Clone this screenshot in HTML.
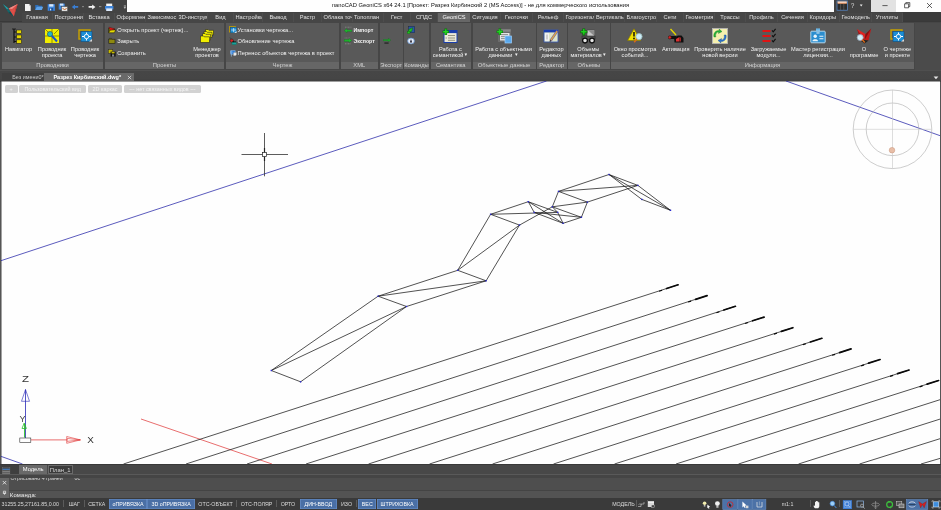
<!DOCTYPE html>
<html lang="ru">
<head>
<meta charset="utf-8">
<title>nanoCAD GeoniCS</title>
<style>
html,body{margin:0;padding:0;}
body{width:941px;height:510px;position:relative;overflow:hidden;background:#555;font-family:"Liberation Sans",sans-serif;color:#e6e6e6;}
.abs{position:absolute;}
svg{display:block;}
#app{position:absolute;left:0;top:0;width:941px;height:510px;overflow:hidden;filter:blur(0.3px);will-change:transform;opacity:0.999;}
/* title bar */
#tb-left{left:0;top:0;width:127px;height:12px;background:#444;}
#tb-title{left:127px;top:0;width:707px;height:11.6px;background:#fff;color:#111;font-size:5.78px;line-height:11px;text-align:center;white-space:nowrap;}
#tb-help{left:834px;top:0;width:37px;height:11.6px;background:#444;}
#tb-min{left:871px;top:0;width:25px;height:11.6px;background:#e3e3e3;}
#tb-rest{left:896px;top:0;width:45px;height:11.6px;background:#fff;}
/* ribbon tabs */
#tabs{left:0;top:11.6px;width:941px;height:10.4px;background:#444;border-bottom:0.8px solid #3a3a3a;box-sizing:border-box;}
.tab{position:absolute;top:1.2px;height:8.9px;line-height:9.6px;background:#474747;font-size:5.7px;color:#e2e2e2;white-space:nowrap;overflow:hidden;text-align:center;box-sizing:border-box;border-right:0.6px solid #4e4e4e;}
.tab.l{text-align:left;padding-left:1.5px;}
.tab.nb{border-right:none;}
.tab.act{background:#686868;color:#fff;border-right:none;}
/* ribbon body */
#ribbon{left:0;top:22px;width:941px;height:48px;background:#474747;}
.panel{position:absolute;top:0.6px;height:46.1px;background:#5a5a5a;}
.panel .lbl{position:absolute;left:0;right:0;bottom:0;height:6.6px;background:#676767;color:#d4d4d4;font-size:5.8px;line-height:6.8px;text-align:center;white-space:nowrap;overflow:hidden;}
.big{position:absolute;top:27px;font-size:5.65px;line-height:6.3px;color:#f2f2f2;text-align:center;white-space:nowrap;transform:translateX(-50%);}
.sm{position:absolute;font-size:5.75px;line-height:7px;color:#f2f2f2;white-space:nowrap;}
.ico{position:absolute;}
.dd{font-size:4.2px;position:relative;top:-0.5px;margin-left:0.4px;}
/* doc tabs */
#below{left:0;top:69.6px;width:941px;height:1.7px;background:#505050;}
#doctabs{left:0;top:71.3px;width:941px;height:10.3px;background:linear-gradient(#474747,#464646 70%,#3e3e3e);}
/* canvas */
#canvas{left:1px;top:81px;width:939px;height:383px;background:#fff;overflow:hidden;}
.vb{position:absolute;top:4px;height:7.5px;background:#d3d3d3;border-radius:1.5px;color:#f6f6f6;font-size:5.4px;line-height:8.6px;overflow:hidden;text-align:center;white-space:nowrap;}
/* bottom */
#modeltabs{left:0;top:464px;width:941px;height:10.2px;background:#494949;border-top:0.6px solid #3a3a3a;box-sizing:border-box;}
#cmdsep{left:0;top:474.2px;width:941px;height:4px;background:#464646;border-top:0.9px solid #5a5a5a;box-sizing:border-box;}
#cmdhist{left:0;top:478.2px;width:941px;height:11.6px;background:#4f4f4f;overflow:hidden;}
#cmdline{left:0;top:489.8px;width:941px;height:8.1px;background:#545454;border-top:0.7px solid #454545;box-sizing:border-box;}
#cmdleft{left:0;top:478.2px;width:9px;height:19.7px;background:#686868;}
#status{left:0;top:497.9px;width:941px;height:12.1px;background:#3b3b3b;}
.st{position:absolute;top:0.9px;height:10.4px;line-height:11.2px;font-size:5.3px;color:#dcdcdc;white-space:nowrap;text-align:center;}
.st.on{background:#4b70a6;color:#fff;box-shadow:inset 0 0 0 0.6px #6b92cc;}
</style>
</head>
<body>
<div id="app">
<!-- TITLE BAR -->
<div id="tb-left" class="abs">
<svg class="abs" style="left:0;top:0" width="126" height="22" viewBox="0 0 126 22">
<path d="M25 4H29L30.7 5.7V11H25Z" fill="#f4f4f4"/><path d="M29 4V5.7H30.7Z" fill="#bbb"/>
<path d="M35.2 10V5H38L38.8 5.8H42V10Z" fill="#2f6fb8"/><path d="M35.2 10L36.8 6.8H43.2L41.8 10Z" fill="#5fa4ea"/>
<rect x="47.7" y="4.2" width="7.2" height="6.6" fill="#3f86dc"/><rect x="49.2" y="4.2" width="4.2" height="2.4" fill="#d8e8fa"/><rect x="49.4" y="8" width="3.8" height="2.8" fill="#1f5499"/><rect x="50" y="8.6" width="1.2" height="1.8" fill="#d8e8fa"/>
<rect x="58.7" y="3.6" width="6" height="6" fill="#3f86dc"/><rect x="60" y="3.6" width="3.4" height="2" fill="#d8e8fa"/><rect x="61.6" y="6.6" width="6" height="4.6" fill="#e8e8e8" stroke="#444" stroke-width="0.5"/><path d="M62.6 8L64.6 10L66.6 8" stroke="#c55a11" stroke-width="0.9" fill="none"/>
<path d="M71.8 6.9L75 4.4V6H78.2V7.8H75V9.4Z" fill="#3a7fd5"/>
<path d="M82 6.3H84L83 7.5Z" fill="#bbb"/>
<path d="M95.4 6.9L92.2 4.4V6H88.6V7.8H92.2V9.4Z" fill="#f4f4f4"/>
<path d="M99 6.3H101.4V7.1H99Z" fill="#aaa"/>
<rect x="106.2" y="3.6" width="6" height="3" fill="#f4f4f4"/><rect x="105" y="6" width="8.4" height="3.4" fill="#3f86dc"/><rect x="106.2" y="8.4" width="6" height="2.6" fill="#dbe9fb"/>
<path d="M123.8 6H126" stroke="#e4e4e4" stroke-width="0.7"/><path d="M123.7 7.2H126.1L124.9 8.8Z" fill="#e4e4e4"/>
</svg></div>
<div id="tb-title" class="abs">nanoCAD GeoniCS x64 24.1 [Проект: Разрез Кирбинский 2 (MS Access)] - не для коммерческого использования</div>
<div id="tb-help" class="abs"><svg class="abs" style="left:0;top:0" width="37" height="11" viewBox="0 0 37 11">
<rect x="3" y="1" width="10.4" height="9.2" fill="#2e2e2e" stroke="#5a8fd6" stroke-width="0.7"/><rect x="3.6" y="1.6" width="9.2" height="2.2" fill="#f0a070"/><rect x="3.6" y="1.6" width="9.2" height="0.9" fill="#fff"/><path d="M6.6 4V10M9.8 4V10" stroke="#777" stroke-width="0.5"/>
<text x="18.6" y="8.3" font-size="6.5" fill="#ddd" text-anchor="middle" font-family="Liberation Sans, sans-serif">?</text>
<path d="M25.8 4.6H28.6L27.2 6.4Z" fill="#eee"/></svg></div>
<div id="tb-min" class="abs"><svg width="25" height="11"><path d="M11.4 5.6H16.6" stroke="#222" stroke-width="0.7"/></svg></div>
<div id="tb-rest" class="abs"><svg width="45" height="11"><path d="M8.6 3.8H12.6V7.8H8.6Z" fill="none" stroke="#222" stroke-width="0.7"/><path d="M9.8 3.8V2.6H13.8V6.6H12.6" fill="none" stroke="#222" stroke-width="0.7"/><path d="M31 3L36 8M36 3L31 8" stroke="#222" stroke-width="0.7"/></svg></div>
<svg class="abs" style="left:0;top:0;z-index:5" width="22" height="20" viewBox="0 0 22 20">
<path d="M2.8 3.9L8.6 8.4L13.8 16.6L8.4 12.6Z" fill="#16666b"/><path d="M2.8 3.9L8.6 8.4L6.8 9Z" fill="#2aa3a8"/><path d="M8.4 12.6L13.8 16.6L11 12Z" fill="#0f4a50"/>
<path d="M17.7 3.9L13.8 16.6L8.6 8.4Z" fill="#df5049"/><path d="M17.7 3.9L13.8 16.6L15.6 8Z" fill="#b83a36"/><path d="M17.7 3.9L8.6 8.4L12 9Z" fill="#f0908a"/>
</svg>
<!-- RIBBON TABS -->
<div id="tabs" class="abs">
<div class="abs" style="left:903px;top:0;width:38px;height:9.6px;background:#3c3c3c"></div>
<div class="tab " style="left:22px;width:31px">Главная</div>
<div class="tab l" style="left:53px;width:31px">Построения</div>
<div class="tab " style="left:84px;width:31px">Вставка</div>
<div class="tab l" style="left:115px;width:31px">Оформление</div>
<div class="tab l" style="left:146px;width:31px">Зависимости</div>
<div class="tab l" style="left:177px;width:31px">3D-инструменты</div>
<div class="tab " style="left:208px;width:26px">Вид</div>
<div class="tab l" style="left:234px;width:29px">Настройки</div>
<div class="tab " style="left:263px;width:31px">Вывод</div>
<div class="tab " style="left:294px;width:28px">Растр</div>
<div class="tab l" style="left:322px;width:30.5px">Облака точек</div>
<div class="tab l" style="left:352.5px;width:31.0px">Топоплан</div>
<div class="tab " style="left:383.5px;width:27.5px">Гест</div>
<div class="tab " style="left:411px;width:27px">СПДС</div>
<div class="tab act" style="left:438px;width:32px">GeoniCS</div>
<div class="tab " style="left:470px;width:31px">Ситуация</div>
<div class="tab " style="left:501px;width:32px">Геоточки</div>
<div class="tab " style="left:533px;width:31px">Рельеф</div>
<div class="tab l" style="left:564px;width:30.5px">Горизонтали</div>
<div class="tab l" style="left:594.5px;width:30.5px">Вертикальная</div>
<div class="tab l" style="left:625px;width:32px">Благоустройство</div>
<div class="tab " style="left:657px;width:27px">Сети</div>
<div class="tab l" style="left:684px;width:31px">Геометрия</div>
<div class="tab " style="left:715px;width:31px">Трассы</div>
<div class="tab " style="left:746px;width:32px">Профиль</div>
<div class="tab " style="left:778px;width:30px">Сечения</div>
<div class="tab l" style="left:808px;width:32px">Коридоры</div>
<div class="tab l" style="left:840px;width:32px">Геомодель</div>
<div class="tab " style="left:872px;width:31px">Утилиты</div>
</div>
<!-- RIBBON -->
<div id="ribbon" class="abs">
<div class="panel" style="left:2px;width:101px"><div class="lbl">Проводники</div></div>
<div class="panel" style="left:105px;width:119px"><div class="lbl">Проекты</div></div>
<div class="panel" style="left:226px;width:113px"><div class="lbl">Чертеж</div></div>
<div class="panel" style="left:340.5px;width:37.5px"><div class="lbl">XML</div></div>
<div class="panel" style="left:380px;width:22.5px"><div class="lbl">Экспорт</div></div>
<div class="panel" style="left:404px;width:25px"><div class="lbl">Команды</div></div>
<div class="panel" style="left:430.5px;width:40.5px"><div class="lbl">Семантика</div></div>
<div class="panel" style="left:472.5px;width:63.0px"><div class="lbl">Объектные данные</div></div>
<div class="panel" style="left:537px;width:29.5px"><div class="lbl">Редактор</div></div>
<div class="panel" style="left:568px;width:41.5px"><div class="lbl">Объемы</div></div>
<div class="panel" style="left:611px;width:303px"><div class="lbl">Информация</div></div>
<svg class="ico" style="left:9px;top:5.5px" width="16" height="16" viewBox="0 0 16 16"><path d="M5 1V15M5 4H8M5 9H8M5 13.5H8" stroke="#111" stroke-width="1.2" fill="none"/><path d="M3 1h4" stroke="#111" stroke-width="0.8"/><rect x="7.5" y="2" width="5" height="3.6" fill="#e6d800" stroke="#222" stroke-width="0.6"/><rect x="7.5" y="7" width="5" height="3.6" fill="#e6d800" stroke="#222" stroke-width="0.6"/><rect x="7.5" y="11.8" width="5" height="3.6" fill="#e6d800" stroke="#222" stroke-width="0.6"/></svg>
<div class="big" style="left:18.5px;top:23.5px">Навигатор</div>
<svg class="ico" style="left:44px;top:5.5px" width="16" height="16" viewBox="0 0 16 16"><rect x="1" y="1" width="14" height="14" fill="#f2ee00"/><path d="M1 8H15M8 1V15M1 1L6 6M15 1L10 6" stroke="#6d6a00" stroke-width="0.7" fill="none"/><circle cx="6" cy="6" r="2.6" fill="#25b7c4" stroke="#136" stroke-width="0.5"/><path d="M8 8L13 13.5" stroke="#1c54c8" stroke-width="2"/></svg>
<div class="big" style="left:52px;top:23.5px">Проводник<br>проекта</div>
<svg class="ico" style="left:77px;top:5.5px" width="16" height="16" viewBox="0 0 16 16"><path d="M2 2H13V11H2Z" fill="none" stroke="#c9a400" stroke-width="1.4"/><path d="M4 3.5H15V11L12.5 13.5H4Z" fill="#1c8fd6" stroke="#0b4f86" stroke-width="0.6"/><path d="M9.5 4.5V12.5M5 8.5H14" stroke="#fff" stroke-width="1"/><circle cx="9.5" cy="8.5" r="2.2" fill="#1c8fd6" stroke="#fff" stroke-width="0.9"/><path d="M12 13.6L15 11V13.6Z" fill="#ddd"/></svg>
<div class="big" style="left:85px;top:23.5px">Проводник<br>чертежа</div>
<svg class="ico" style="left:199px;top:5.5px" width="16" height="16" viewBox="0 0 16 16"><g stroke="#222" stroke-width="0.6" fill="#f2ee00"><path d="M6.5 1.5H9l.8.8H14.5V7H6.5Z"/><path d="M5 3.5H7.5l.8.8H13V9.5H5Z"/><path d="M3.5 5.5H6l.8.8H11.5V12H3.5Z"/><path d="M1.5 8H4.5l.8.8H10.5V14.5H1.5Z"/></g></svg>
<div class="big" style="left:207px;top:23.5px">Менеджер<br>проектов</div>
<svg class="ico" style="left:442.4px;top:5.5px" width="16" height="16" viewBox="0 0 16 16"><rect x="2" y="2.5" width="13" height="12" fill="#ece9d8" stroke="#1b3fae" stroke-width="1"/><rect x="2" y="2.5" width="13" height="2.6" fill="#1b3fae"/><path d="M6 7.5H13M6 10H13M6 12.3H13" stroke="#8a8a7a" stroke-width="0.9"/><path d="M3.5 10H5" stroke="#888" stroke-width="0.8"/><path d="M3.8 0.6V7M0.6 3.8H7" stroke="#0a7a0a" stroke-width="2.6"/><path d="M3.8 1.2V6.4M1.2 3.8H6.4" stroke="#25d425" stroke-width="1.4"/></svg>
<div class="big" style="left:450.4px;top:23.5px">Работа с<br>семантикой<span class="dd">▼</span></div>
<svg class="ico" style="left:495.5px;top:5.5px" width="16" height="16" viewBox="0 0 16 16"><rect x="2.5" y="1.5" width="12" height="12" fill="#6a6a6a" stroke="#777" stroke-width="0.6"/><rect x="2.5" y="1.5" width="12" height="2.2" fill="#8a8a8a"/><rect x="4" y="5" width="9.5" height="7.5" fill="#e6e6e6"/><path d="M5 6.6H12M5 8.6H12M5 10.6H12" stroke="#777" stroke-width="0.8"/><rect x="9" y="8" width="6.5" height="7" fill="#5aa9ee" stroke="#9fd0ff" stroke-width="0.7"/><path d="M3.8 0.6V7M0.6 3.8H7" stroke="#0a7a0a" stroke-width="2.6"/><path d="M3.8 1.2V6.4M1.2 3.8H6.4" stroke="#25d425" stroke-width="1.4"/></svg>
<div class="big" style="left:503.5px;top:23.5px">Работа с объектными<br>данными <span class="dd">▼</span></div>
<svg class="ico" style="left:543.4px;top:5.5px" width="16" height="16" viewBox="0 0 16 16"><rect x="1" y="2" width="14" height="12" fill="#dfe6c8" stroke="#3355bb" stroke-width="0.8"/><rect x="1" y="2" width="14" height="2.4" fill="#1b3fae"/><rect x="2" y="5.2" width="4" height="7.6" fill="#f4f4f4"/><path d="M4 6.5V11.5" stroke="#999" stroke-width="0.8"/><path d="M7 12L13.5 2.5L15 3.5L8.5 13Z" fill="#e8b830" stroke="#6a4fb0" stroke-width="0.7"/><path d="M7 12L6.6 14L8.5 13Z" fill="#222"/></svg>
<div class="big" style="left:551.4px;top:23.5px">Редактор<br>данных</div>
<svg class="ico" style="left:580.4px;top:5.5px" width="16" height="16" viewBox="0 0 16 16"><path d="M7 2H14.5V8.5H7Z" fill="#c9c9c9" stroke="#444" stroke-width="0.6"/><path d="M8 2.3L14.3 2.3L14.3 8Z" fill="#8d8d8d"/><rect x="2" y="8" width="13" height="3.4" fill="#555" stroke="#222" stroke-width="0.5"/><circle cx="5" cy="12.6" r="2.4" fill="#e8e8e8" stroke="#111" stroke-width="1.3"/><circle cx="12" cy="12.6" r="2.4" fill="#e8e8e8" stroke="#111" stroke-width="1.3"/><path d="M3.8 0.4V7.4M0.4 3.8H7.4" stroke="#0a6a0a" stroke-width="2.8"/><path d="M3.8 1.1V6.6M1.1 3.8H6.6" stroke="#1fcf1f" stroke-width="1.5"/></svg>
<div class="big" style="left:588.4px;top:23.5px">Объемы<br>материалов<span class="dd">▼</span></div>
<svg class="ico" style="left:627px;top:5.5px" width="16" height="16" viewBox="0 0 16 16"><path d="M7 0.8L13.6 12.5H0.6Z" fill="#f2e300" stroke="#8a7a00" stroke-width="0.7"/><path d="M7 4V8.6" stroke="#111" stroke-width="1.5"/><circle cx="7" cy="10.5" r="0.9" fill="#111"/><circle cx="12" cy="8.6" r="3.1" fill="#cfeefa" stroke="#9bb" stroke-width="0.9"/><path d="M9.8 11L7.2 14.2" stroke="#d86a1a" stroke-width="1.6"/></svg>
<div class="big" style="left:635px;top:23.5px">Окно просмотра<br>событий...</div>
<svg class="ico" style="left:667.7px;top:5.5px" width="16" height="16" viewBox="0 0 16 16"><path d="M2.5 1L8 7" stroke="#e6d800" stroke-width="1.4"/><path d="M1 8H8V11H1Z" fill="#111"/><circle cx="1.8" cy="9.4" r="1.6" fill="#d22" stroke="#111" stroke-width="0.5"/><path d="M6 9.5L10 7.5H13.5L15.5 10V14.5H6.5Z" fill="#111"/><path d="M8 11L11.5 9V13.5H8Z" fill="#d33"/><path d="M12.3 9.5V13.5" stroke="#d33" stroke-width="0.9"/></svg>
<div class="big" style="left:675.7px;top:23.5px">Активация</div>
<svg class="ico" style="left:712px;top:5.5px" width="16" height="16" viewBox="0 0 16 16"><rect x="0.5" y="0.5" width="15" height="15" fill="#f6f1b0" stroke="#b5b5b5" stroke-width="0.9"/><path d="M2 9C1 5 4 2 7.5 2.5L7 1L10 3.6L6.4 5.4L6.8 4C4.5 4 3 6 3.8 9Z" fill="#27b53a" stroke="#147a22" stroke-width="0.4"/><path d="M14 7C15 11 12 14 8.5 13.5L9 15L6 12.4L9.6 10.6L9.2 12C11.5 12 13 10 12.2 7Z" fill="#2a74d0" stroke="#134c96" stroke-width="0.4"/></svg>
<div class="big" style="left:720px;top:23.5px">Проверить наличие<br>новой версии</div>
<svg class="ico" style="left:760.5px;top:5.5px" width="16" height="16" viewBox="0 0 16 16"><path d="M1.5 3H9.5M1.5 8H9.5M1.5 13H9.5" stroke="#e01515" stroke-width="2.2"/><path d="M11 2.4L12.2 3.8L14.6 0.8M11 7.4L12.2 8.8L14.6 5.8M11 12.4L12.2 13.8L14.6 10.8" stroke="#111" stroke-width="1.1" fill="none"/></svg>
<div class="big" style="left:768.5px;top:23.5px">Загружаемые<br>модули...</div>
<svg class="ico" style="left:810px;top:5.5px" width="16" height="16" viewBox="0 0 16 16"><rect x="6" y="0.4" width="4" height="3" fill="#6ab6e6"/><rect x="0.8" y="3.2" width="14.4" height="11.6" rx="0.8" fill="#2d8fd0" stroke="#bfe2f7" stroke-width="0.9"/><rect x="6.4" y="4.4" width="3.2" height="1.1" fill="#cfe9f8"/><circle cx="5.2" cy="8.2" r="1.7" fill="#e9f5fc"/><path d="M2.4 13.2C2.4 10.6 8 10.6 8 13.2Z" fill="#e9f5fc"/><path d="M9.4 8.2H13.4M9.4 10.8H13.4" stroke="#e9f5fc" stroke-width="1.1"/></svg>
<div class="big" style="left:818px;top:23.5px">Мастер регистрации<br>лицензии...</div>
<svg class="ico" style="left:856px;top:5.5px" width="16" height="16" viewBox="0 0 16 16"><path d="M1 1L8.5 12L5 13Z" fill="#b01010"/><path d="M1 1L8.5 12L9.5 6Z" fill="#e02424"/><path d="M15.2 0.6L8.5 12L12.5 12.6Z" fill="#c81818"/><path d="M15.2 0.6L9.5 6L8.5 12Z" fill="#8d0c0c"/><path d="M5 13L8.5 12L12.5 12.6L8.6 15.4Z" fill="#222"/><circle cx="4.2" cy="9.6" r="3" fill="#d4eef8" stroke="#9ab" stroke-width="0.8"/><path d="M6.3 11.8L8.8 14.6" stroke="#d86a1a" stroke-width="1.5"/></svg>
<div class="big" style="left:864px;top:23.5px">О<br>программе</div>
<svg class="ico" style="left:889.4px;top:5.5px" width="16" height="16" viewBox="0 0 16 16"><path d="M2 2H13V11H2Z" fill="none" stroke="#c9a400" stroke-width="1.4"/><path d="M4 3.5H15V11L12.5 13.5H4Z" fill="#1c8fd6" stroke="#0b4f86" stroke-width="0.6"/><path d="M9.5 4.5V12.5M5 8.5H14" stroke="#fff" stroke-width="1"/><circle cx="9.5" cy="8.5" r="2.2" fill="#1c8fd6" stroke="#fff" stroke-width="0.9"/><path d="M12 13.6L15 11V13.6Z" fill="#ddd"/></svg>
<div class="big" style="left:897.4px;top:23.5px">О чертеже<br>и проекте</div>
<svg class="ico" style="left:108px;top:4.2px" width="8" height="8" viewBox="0 0 8 8"><path d="M0.6 6.8V2.2H3.2L4 3H6.4V4" fill="#7a7200" stroke="#111" stroke-width="0.5"/><path d="M0.6 6.8L2.2 4H7.8L6.2 6.8Z" fill="#e8dc00" stroke="#111" stroke-width="0.5"/><path d="M0.8 1.2L7 2.9L2.4 4.2Z" fill="#e01818" stroke="#600" stroke-width="0.3"/></svg>
<div class="sm" style="left:117.2px;top:4.7px">Открыть проект (чертеж)...</div>
<svg class="ico" style="left:108px;top:15.3px" width="8" height="8" viewBox="0 0 8 8"><rect x="0.8" y="2.2" width="6.2" height="4.4" fill="#8f8a10" stroke="#1a1a1a" stroke-width="0.6"/><path d="M0.8 2.2L1.4 1.4H3.4L4 2.2" fill="#8f8a10" stroke="#1a1a1a" stroke-width="0.5"/></svg>
<div class="sm" style="left:117.2px;top:15.8px">Закрыть</div>
<svg class="ico" style="left:108px;top:27.4px" width="8" height="8" viewBox="0 0 8 8"><rect x="0.4" y="0.6" width="4.4" height="3.6" fill="#c9bc00" stroke="#222" stroke-width="0.4"/><rect x="2.6" y="2.6" width="5" height="5" fill="#111"/><rect x="3.6" y="2.8" width="3" height="1.6" fill="#c9bc00"/><rect x="4" y="5.4" width="2.2" height="2.2" fill="#888"/></svg>
<div class="sm" style="left:117.2px;top:27.9px">Сохранить</div>
<svg class="ico" style="left:229.3px;top:4.2px" width="8" height="8" viewBox="0 0 8 8"><rect x="0.4" y="0.6" width="6" height="5.4" fill="none" stroke="#c9a400" stroke-width="0.8"/><rect x="1.6" y="1.4" width="6" height="5.4" fill="#1c8fd6" stroke="#0b4f86" stroke-width="0.4"/><path d="M4.6 2V6.2M2.2 4H7.2" stroke="#fff" stroke-width="0.6"/><path d="M5.2 7L7.6 5V7Z" fill="#ddd"/></svg>
<div class="sm" style="left:237.6px;top:4.7px">Установки чертежа...</div>
<svg class="ico" style="left:229.3px;top:15.3px" width="8" height="8" viewBox="0 0 8 8"><path d="M1 0.5L3 3" stroke="#222" stroke-width="0.5"/><circle cx="2.8" cy="3.6" r="1.6" fill="#d22" stroke="#111" stroke-width="0.4"/><path d="M3.2 5L4.8 3.6V4.4H7V5.6H4.8V6.4Z" fill="#111"/><rect x="3" y="5.4" width="4.4" height="2.2" fill="#1aa0a0" stroke="#064" stroke-width="0.3"/></svg>
<div class="sm" style="left:237.6px;top:15.8px">Обновление чертежа</div>
<svg class="ico" style="left:229.3px;top:27.4px" width="8" height="8" viewBox="0 0 8 8"><path d="M1.6 1.6H6.2V5.2H1.6Z" fill="#2a7ad8" stroke="#9cc8f4" stroke-width="0.5"/><path d="M2.4 2.6V7.6M1 3.4L2.4 2.2L3.8 3.4" stroke="#9cc8f4" stroke-width="0.6" fill="none"/><path d="M4.4 3.6H7.6V5.8L6.6 6.8H4.4Z" fill="#eee" stroke="#666" stroke-width="0.3"/></svg>
<div class="sm" style="left:237.6px;top:27.9px">Перенос объектов чертежа в проект</div>
<svg class="ico" style="left:344px;top:4.2px" width="8" height="8" viewBox="0 0 8 8"><path d="M1 1.2H7.4" stroke="#8a8a8a" stroke-width="0.8" stroke-dasharray="1 0.5"/><path d="M7.8 3.9H3V2.6L0.2 4.7L3 6.8V5.6H7.8Z" fill="#20b830" stroke="#0c6a18" stroke-width="0.3"/></svg>
<div class="sm" style="left:353.4px;top:4.7px;font-weight:bold;font-size:5.3px">Импорт</div>
<svg class="ico" style="left:344px;top:15.3px" width="8" height="8" viewBox="0 0 8 8"><path d="M0.6 1H6.6" stroke="#8a8a8a" stroke-width="0.6" stroke-dasharray="1 0.5"/><path d="M0.2 2.6H5V1.4L7.8 3.5L5 5.6V4.4H0.2Z" fill="#20b830" stroke="#0c6a18" stroke-width="0.3"/><path d="M1 6.8H7" stroke="#8a8a8a" stroke-width="0.9" stroke-dasharray="1 0.5"/></svg>
<div class="sm" style="left:353.4px;top:15.8px;font-weight:bold;font-size:5.3px">Экспорт</div>
<svg class="ico" style="left:383px;top:15.3px" width="8" height="8" viewBox="0 0 8 8"><path d="M0.2 2.6H5.4V1.4L7.8 3.1L5.4 4.8V3.8H0.2Z" fill="#1cae2c" stroke="#0c6a18" stroke-width="0.3"/><path d="M1.4 5.2H5.6V7H1.4Z" fill="#333"/></svg>
<svg class="ico" style="left:407.4px;top:4.2px" width="8" height="8" viewBox="0 0 8 8"><rect x="1.6" y="0.4" width="6" height="6.4" fill="#2a55a8" stroke="#123" stroke-width="0.4"/><path d="M0.6 6.8L2.2 3.2L5.8 1.8L4.6 5.4Z" fill="#22c322" stroke="#0a5a0a" stroke-width="0.4"/><rect x="0.4" y="5.4" width="2.6" height="2.2" fill="#22c322" stroke="#0a5a0a" stroke-width="0.3"/></svg>
<svg class="ico" style="left:407.4px;top:15.3px" width="8" height="8" viewBox="0 0 8 8"><ellipse cx="4" cy="4" rx="3.4" ry="2.9" fill="#e8eef8" stroke="#5b8fd0" stroke-width="0.7"/><path d="M4 2L5.2 5.6H2.8Z" fill="#223"/></svg>
</div>
<div class="abs" style="left:914.6px;top:22.5px;width:26.4px;height:49px;background:#4c4c4c"></div>
<div id="below" class="abs"></div>
<div id="doctabs" class="abs">
<div class="abs" style="left:2px;top:2px;width:41.5px;height:8.3px;background:#414141;color:#c8c8c8;font-size:5.4px;line-height:8px;text-align:right;white-space:nowrap;">Без имени0*</div>
<div class="abs" style="left:43.5px;top:2px;width:90.5px;height:8.3px;background:#6b6b6b;color:#fff;font-size:5.5px;font-weight:bold;line-height:8px;white-space:nowrap;"><span style="position:absolute;left:10px;top:0">Разрез Кирбинский.dwg*</span><svg class="abs" style="left:83.5px;top:1.6px" width="5" height="5"><path d="M0.8 0.8L4.2 4.2M4.2 0.8L0.8 4.2" stroke="#eee" stroke-width="0.7"/></svg></div>
<svg class="abs" style="left:933px;top:4.4px" width="6" height="4"><path d="M0.6 0.6H5.4L3 3.2Z" fill="#e8e8e8"/></svg>
</div>
<!-- CANVAS -->
<div id="canvas" class="abs">
<svg class="abs" style="left:0;top:0" width="939" height="383" viewBox="1 81 939 383">
<rect x="1" y="81" width="0.5" height="383" fill="#444"/><rect x="1" y="81" width="939" height="0.5" fill="#3e3e3e"/>
<path d="M0 261L546.5 81M786 81L941 136M0 456L22.5 464" stroke="#2626a8" stroke-width="0.75" fill="none"/>
<path d="M141 419L272 464" stroke="#e03030" stroke-width="0.7" fill="none"/>
<path d="M123.5 464L678.1 284.8M186.0 464L707.1 295.6M247.0 464L735.4 306.3M306.0 464L764.1 317.1M368.5 464L792.9 327.7M429.5 464L821.9 338.3M492.5 464L851.1 348.9M553.5 464L880.1 359.5M614.5 464L909.1 370.0M676.0 464L938.6 380.5M738.5 464L940 399.7M798.5 464L940 419.1M859.5 464L940 438.7M921.0 464L940 458.4" stroke="#1a1a1a" stroke-width="0.75" fill="none"/>
<path d="M666.6 288.52L678.1 284.8M695.6 299.32L707.1 295.6M723.9 310.01L735.4 306.3M752.6 320.79L764.1 317.1M781.4 331.39L792.9 327.7M810.4 341.98L821.9 338.3M839.6 352.59L851.1 348.9M868.6 363.18L880.1 359.5M897.6 373.67L909.1 370.0M927.1 384.16L938.6 380.5" stroke="#0a0a0a" stroke-width="1.7" fill="none" stroke-linecap="round"/>
<path d="M659.1 291.24L662.1 290.27M688.1 302.04L691.1 301.07M716.4 312.73L719.4 311.77M745.1 323.49L748.1 322.53M773.9 334.10L776.9 333.14M802.9 344.69L805.9 343.73M832.1 355.30L835.1 354.34M861.1 365.88L864.1 364.92M890.1 376.36L893.1 375.41M919.6 386.84L922.6 385.89" stroke="#0a0a0a" stroke-width="1.2" fill="none"/>
<path d="M271.3 370.5L300.6 381.8M271.3 370.5L378.1 296.2M271.3 370.5L406.5 306.5M300.6 381.8L406.5 306.5M378.1 296.2L406.5 306.5M378.1 296.2L457.7 270.3M378.1 296.2L486.1 280.8M406.5 306.5L486.1 280.8M457.7 270.3L486.1 280.8M457.7 270.3L490.6 214.3M457.7 270.3L519.5 225.1M486.1 280.8L519.5 225.1M490.6 214.3L519.5 225.1M490.6 214.3L528.3 201.7M490.6 214.3L557.7 212.4M519.5 225.1L552.3 206.8M528.3 201.7L534.2 212.4M528.3 201.7L557.7 212.4M528.3 201.7L563.1 223.3M534.2 212.4L563.1 223.3M534.2 212.4L581.4 217.3M552.3 206.8L581.4 217.3M552.3 206.8L587.4 202.1M552.3 206.8L558.5 191.4M557.7 212.4L563.1 223.3M563.1 223.3L581.4 217.3M581.4 217.3L587.4 202.1M558.5 191.4L587.4 202.1M558.5 191.4L609 174.5M558.5 191.4L637.9 185.4M587.4 202.1L637.9 185.4M609 174.5L637.9 185.4M609 174.5L641.8 199.4M609 174.5L670.5 210.3M637.9 185.4L670.5 210.3M641.8 199.4L670.5 210.3M552.3 206.8L557.7 212.4" stroke="#1a1a1a" stroke-width="0.75" fill="none"/>
<rect x="270.6" y="369.8" width="1.4" height="1.4" fill="#2a2ad0"/><rect x="299.9" y="381.1" width="1.4" height="1.4" fill="#2a2ad0"/><rect x="377.4" y="295.5" width="1.4" height="1.4" fill="#2a2ad0"/><rect x="405.8" y="305.8" width="1.4" height="1.4" fill="#2a2ad0"/><rect x="457.0" y="269.6" width="1.4" height="1.4" fill="#2a2ad0"/><rect x="485.4" y="280.1" width="1.4" height="1.4" fill="#2a2ad0"/><rect x="489.9" y="213.6" width="1.4" height="1.4" fill="#2a2ad0"/><rect x="518.8" y="224.4" width="1.4" height="1.4" fill="#2a2ad0"/><rect x="527.6" y="201.0" width="1.4" height="1.4" fill="#2a2ad0"/><rect x="533.5" y="211.7" width="1.4" height="1.4" fill="#2a2ad0"/><rect x="557.0" y="211.7" width="1.4" height="1.4" fill="#2a2ad0"/><rect x="562.4" y="222.6" width="1.4" height="1.4" fill="#2a2ad0"/><rect x="551.6" y="206.1" width="1.4" height="1.4" fill="#2a2ad0"/><rect x="580.7" y="216.6" width="1.4" height="1.4" fill="#2a2ad0"/><rect x="557.8" y="190.7" width="1.4" height="1.4" fill="#2a2ad0"/><rect x="586.7" y="201.4" width="1.4" height="1.4" fill="#2a2ad0"/><rect x="608.3" y="173.8" width="1.4" height="1.4" fill="#2a2ad0"/><rect x="637.2" y="184.7" width="1.4" height="1.4" fill="#2a2ad0"/><rect x="641.1" y="198.7" width="1.4" height="1.4" fill="#2a2ad0"/><rect x="669.8" y="209.6" width="1.4" height="1.4" fill="#2a2ad0"/>
<!-- crosshair -->
<path d="M241.5 154.5H288M264.5 133V176.3" stroke="#333" stroke-width="0.8"/><path d="M264.5 148V161" stroke="#222" stroke-width="1.2"/><rect x="262.4" y="152.4" width="4.2" height="4.2" fill="#fff" stroke="#222" stroke-width="0.7"/>
<!-- compass -->
<circle cx="892.5" cy="129.3" r="39.3" fill="none" stroke="#adadad" stroke-width="0.6"/><circle cx="892.5" cy="129.3" r="26.3" fill="none" stroke="#adadad" stroke-width="0.6"/>
<path d="M853.2 129.3H931.8M892.5 90V168.6" stroke="#c8c8c8" stroke-width="0.6"/>
<circle cx="892" cy="150.2" r="2.8" fill="#e9bfa8" stroke="#c9977e" stroke-width="0.5"/>
<!-- UCS -->
<path d="M25.5 439.5V389.5" stroke="#2828b8" stroke-width="0.8"/><path d="M25.5 389.5L21.5 401.3H29.5Z" fill="none" stroke="#2828b8" stroke-width="0.6"/>
<path d="M24.6 437.5V424" stroke="#2fc02f" stroke-width="1"/><path d="M24.2 423L22 428.5H26.4Z" fill="none" stroke="#2fc02f" stroke-width="0.8"/>
<path d="M31 439.9H68" stroke="#e03030" stroke-width="0.7"/><path d="M80.4 439.9L66.7 436.5V443.3Z" fill="none" stroke="#e03030" stroke-width="0.6"/><path d="M80.4 439.9L67 438.4M80.4 439.9L67 441.4" stroke="#e03030" stroke-width="0.6"/>
<rect x="19.8" y="438" width="11" height="4.4" fill="#fff" stroke="#333" stroke-width="0.6"/>
<text x="25.5" y="381.8" font-size="8.2" fill="#333" text-anchor="middle" textLength="7" lengthAdjust="spacingAndGlyphs" font-family="Liberation Sans, sans-serif">Z</text>
<text x="22.6" y="422" font-size="8.2" fill="#444" text-anchor="middle" textLength="6" lengthAdjust="spacingAndGlyphs" font-family="Liberation Sans, sans-serif">Y</text>
<text x="90.6" y="443" font-size="8.2" fill="#333" text-anchor="middle" textLength="6.6" lengthAdjust="spacingAndGlyphs" font-family="Liberation Sans, sans-serif">X</text>
</svg>
<div class="vb" style="left:3.5px;width:13.2px">+</div>
<div class="vb" style="left:18.4px;width:66.6px">Пользовательский вид</div>
<div class="vb" style="left:86.9px;width:34.3px">2D каркас</div>
<div class="vb" style="left:122.9px;width:77.1px">--- нет связанных видов ---</div>
</div>
<!-- BOTTOM -->
<div id="modeltabs" class="abs">
<div class="abs" style="left:0;top:0;width:19px;height:10px;background:#404040"></div>
<svg class="abs" style="left:2px;top:1.5px" width="9" height="8" viewBox="0 0 9 8"><rect x="0.3" y="0.3" width="7.6" height="7" fill="#3a3a3a" stroke="#777" stroke-width="0.4"/><path d="M0.5 2.2H7.8" stroke="#4b93e6" stroke-width="1"/><path d="M0.5 4.2H7.8M0.5 6.1H7.8" stroke="#e6e6e6" stroke-width="0.6"/></svg>
<div class="abs" style="left:19px;top:0.2px;width:28.3px;height:9.4px;background:#6a6a6a;color:#fff;font-size:5.8px;line-height:9.6px;text-align:center;">Модель</div>
<div class="abs" style="left:47.8px;top:0.3px;width:24.9px;height:9.1px;box-sizing:border-box;border:0.6px solid #6c6c6c;background:#3c3c3c;color:#d8d8d8;font-size:5.9px;line-height:8.2px;text-align:center;">План_1</div>
</div>
<div id="cmdsep" class="abs"></div>
<div id="cmdhist" class="abs"><div class="abs" style="left:10.5px;top:-2.9px;font-size:5.3px;line-height:7px;color:#d6d6d6;white-space:pre;height:7px;">Отрисовано 4 граней        0с</div></div>
<div id="cmdline" class="abs"><div class="abs" style="left:9.8px;top:-0.2px;font-size:5.9px;line-height:8px;color:#eee;white-space:nowrap;letter-spacing:0.15px">Команда:</div></div>
<div id="cmdleft" class="abs"><svg class="abs" style="left:0;top:0" width="9" height="20" viewBox="0 0 9 20"><path d="M2.8 3L6.2 6.4M6.2 3L2.8 6.4" stroke="#f0f0f0" stroke-width="0.8"/><path d="M3.4 13.2H5.6V15.2H3.4Z" fill="none" stroke="#f0f0f0" stroke-width="0.7"/><path d="M2.9 15.3H6.1M4.5 15.3V16.8" stroke="#f0f0f0" stroke-width="0.7"/></svg></div>
<div id="status" class="abs">
<div class="st" style="left:0.25px;width:60px">31255.25,27161.85,0.00</div>
<div class="abs" style="left:63px;top:2px;width:0.6px;height:7.5px;background:#5c5c5c"></div>
<div class="st" style="left:44.30000000000001px;width:60px">ШАГ</div>
<div class="abs" style="left:84px;top:2px;width:0.6px;height:7.5px;background:#5c5c5c"></div>
<div class="st" style="left:66.8px;width:60px">СЕТКА</div>
<div class="st on" style="left:109px;width:38px">оПРИВЯЗКА</div>
<div class="st on" style="left:147.4px;width:47.599999999999994px">3D оПРИВЯЗКА</div>
<div class="st" style="left:185.55px;width:60px">ОТС-ОБЪЕКТ</div>
<div class="abs" style="left:236.2px;top:2px;width:0.6px;height:7.5px;background:#5c5c5c"></div>
<div class="st" style="left:226.5px;width:60px">ОТС-ПОЛЯР</div>
<div class="abs" style="left:276px;top:2px;width:0.6px;height:7.5px;background:#5c5c5c"></div>
<div class="st" style="left:257.95px;width:60px">ОРТО</div>
<div class="st on" style="left:299.6px;width:37.39999999999998px">ДИН-ВВОД</div>
<div class="st" style="left:316.54999999999995px;width:60px">ИЗО</div>
<div class="abs" style="left:356px;top:2px;width:0.6px;height:7.5px;background:#5c5c5c"></div>
<div class="st on" style="left:358.4px;width:17.80000000000001px">ВЕС</div>
<div class="st on" style="left:376.5px;width:41.19999999999999px">ШТРИХОВКА</div>
<div class="st" style="left:593.4px;width:60px">МОДЕЛЬ</div>
<div class="abs" style="left:635.6px;top:2px;width:0.6px;height:7.5px;background:#5c5c5c"></div>
<div class="abs" style="left:646.5px;top:2px;width:0.6px;height:7.5px;background:#5c5c5c"></div>
<div class="st" style="left:757.6px;width:60px">m1:1</div>
<div class="abs" style="left:809.8px;top:2px;width:0.6px;height:7.5px;background:#5c5c5c"></div>
<div class="abs" style="left:839px;top:2px;width:0.6px;height:7.5px;background:#5c5c5c"></div>
<svg class="abs" style="left:600px;top:0.7px" width="341" height="11" viewBox="600 499 341 11">
<path d="M638 506.5H641V504H644V502" stroke="#ccc" stroke-width="0.6" fill="none"/><path d="M638.5 505L640 503.5L641.5 505" stroke="#ccc" stroke-width="0.5" fill="none"/>
<rect x="648" y="501.4" width="6" height="5.6" fill="#d8d8d8"/><rect x="648" y="501.4" width="6" height="1.4" fill="#f4f4f4"/><rect x="651.4" y="505" width="3.2" height="2.6" fill="#444" stroke="#ddd" stroke-width="0.4"/>
<circle cx="704.6" cy="503.2" r="1.8" fill="#f4efb0"/><rect x="703.8" y="505" width="1.6" height="1.6" fill="#bbb"/><path d="M707.4 504.4L710.2 507L708.8 507.2L709.4 508.6L708.6 508.8L708 507.4L707.2 508.2Z" fill="#fff"/>
<circle cx="717.4" cy="503.6" r="2.4" fill="#f2f2f2"/><rect x="716.3" y="505.8" width="2.2" height="2" fill="#bbb"/>
<rect x="722.8" y="499.6" width="14.7" height="10" fill="#4d73a8" stroke="#6f97d2" stroke-width="0.5"/><rect x="737.9" y="499.6" width="14.2" height="10" fill="#4d73a8" stroke="#6f97d2" stroke-width="0.5"/><rect x="752.5" y="499.6" width="13.4" height="10" fill="#4d73a8" stroke="#6f97d2" stroke-width="0.5"/>
<circle cx="730.2" cy="504.6" r="2.8" fill="none" stroke="#d62222" stroke-width="0.8"/><path d="M729 503L731.6 505.6L730.4 505.7L730.9 506.8L730.2 507L729.8 505.9L729 506.6Z" fill="#222"/>
<path d="M742.4 501.6L746.6 505.6L744.8 505.8L745.6 507.6L744.6 508L743.8 506.2L742.4 507.4Z" fill="#fff"/><rect x="745.8" y="505.6" width="2.6" height="2.6" fill="#d8d8d8"/>
<path d="M757 502V507H762V502" stroke="#e8e8e8" stroke-width="0.7" fill="none"/><path d="M759.4 501.4V505.4" stroke="#bcd" stroke-width="0.5"/>
<path d="M814.4 507.8C813.6 506.4 813.4 505.6 814 505.2L815 506V502.2C815 501.6 816 501.6 816 502.2V501.4C816 500.8 817.1 500.8 817.1 501.4V501.8C817.1 501.2 818.2 501.2 818.2 501.8V502.6C818.2 502 819.3 502 819.3 502.6V506C819.3 507 818.8 507.8 818.2 508.2H815Z" fill="#f4f4f4"/>
<circle cx="832.4" cy="503.6" r="2.3" fill="#9fd0f6" stroke="#4a90e2" stroke-width="0.7"/><path d="M834 505.4L836.4 508" stroke="#4a90e2" stroke-width="1"/>
<rect x="842.9" y="500.2" width="9" height="8.8" fill="#3f7fd8"/><circle cx="847" cy="504" r="2" fill="none" stroke="#dfeaf8" stroke-width="0.6"/><path d="M848.4 505.6L850.2 507.6" stroke="#dfeaf8" stroke-width="0.7"/><rect x="844.4" y="501.4" width="5.8" height="5.8" fill="none" stroke="#9cc2f0" stroke-width="0.4"/>
<rect x="857" y="501" width="6.6" height="6" fill="none" stroke="#8fb8e8" stroke-width="0.7"/><circle cx="862" cy="505.6" r="1.5" fill="#444" stroke="#ddd" stroke-width="0.5"/><path d="M863 506.8L864.6 508.6" stroke="#ddd" stroke-width="0.6"/>
<ellipse cx="875.6" cy="504.6" rx="3.8" ry="1.6" fill="none" stroke="#a8a8a8" stroke-width="0.6"/><path d="M875.6 501V508.4" stroke="#a8a8a8" stroke-width="0.6"/><path d="M874.4 507.4L875.6 508.8L876.8 507.4" stroke="#a8a8a8" stroke-width="0.5" fill="none"/>
<circle cx="889.6" cy="504.6" r="2.9" fill="none" stroke="#3ec43e" stroke-width="1.2"/><path d="M888.4 500.8L890.6 501.8L888.6 503.2Z" fill="#3ec43e"/><path d="M890.8 508.4L888.6 507.4L890.6 506Z" fill="#3ec43e"/>
<rect x="896.4" y="501.6" width="5.4" height="4" fill="#555" stroke="#ccc" stroke-width="0.5"/><rect x="899" y="504" width="5" height="3.8" fill="#777" stroke="#ddd" stroke-width="0.5"/>
<rect x="906.4" y="499.6" width="21.4" height="10" fill="#4d73a8" stroke="#6f97d2" stroke-width="0.5"/>
<path d="M908.8 503.4C909.6 501.4 914.6 501.4 915.4 503.4" stroke="#f0f0f0" stroke-width="0.8" fill="none"/><path d="M915.4 505.6C914.6 507.6 909.6 507.6 908.8 505.6" stroke="#d0d8e8" stroke-width="0.8" fill="none"/><path d="M908.6 504.6H915.6" stroke="#123" stroke-width="0.6"/>
<path d="M918.6 501.6L920.6 507.8L922.4 504.6L924.2 507.8L926.4 501.6L922.4 504Z" fill="#d62222" stroke="#7a1010" stroke-width="0.3"/>
<rect x="933.2" y="501.8" width="5.6" height="5.2" fill="#3f8fe0" stroke="#d8e6f6" stroke-width="0.6"/><path d="M932 500.8H933.6M932 500.8V502.2M940 500.8H938.4M940 500.8V502.2M932 508H933.6M932 508V506.6M940 508H938.4M940 508V506.6" stroke="#eee" stroke-width="0.5" fill="none"/>
</svg>
</div>
</div>
</body>
</html>
